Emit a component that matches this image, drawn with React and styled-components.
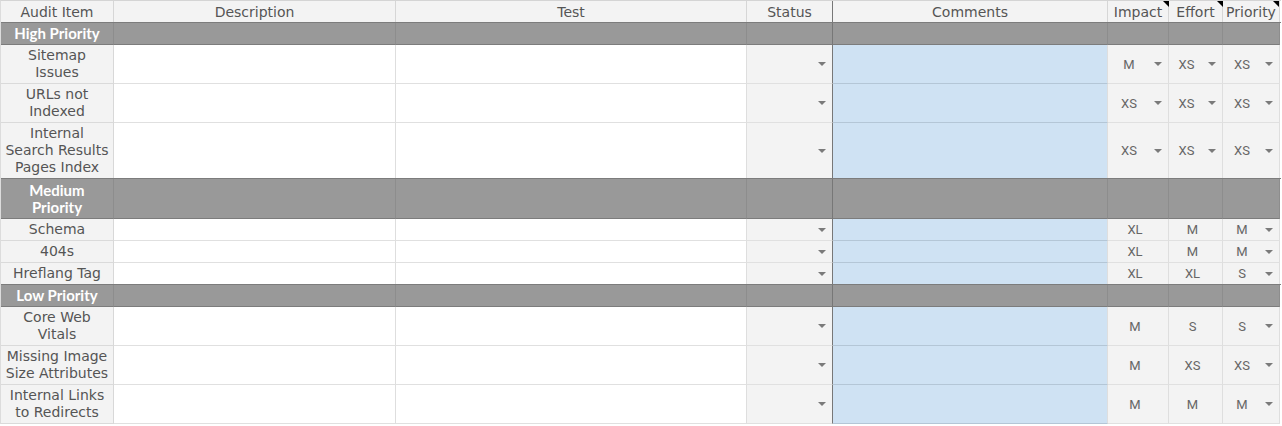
import styled, { createGlobalStyle } from "styled-components";

const GlobalStyle = createGlobalStyle`
	body {
		margin: 0;
		background: #ffffff;
		font-family: "DejaVu Sans", "Liberation Sans", sans-serif;
	}
`;

const sections = [
	{
		title: ["High Priority"],
		h: 22,
		rows: [
			{ item: ["Sitemap", "Issues"], h: 39, impact: ["M", true], effort: ["XS", true], priority: "XS" },
			{ item: ["URLs not", "Indexed"], h: 39, impact: ["XS", true], effort: ["XS", true], priority: "XS" },
			{ item: ["Internal", "Search Results", "Pages Index"], h: 56, impact: ["XS", true], effort: ["XS", true], priority: "XS" },
		],
	},
	{
		title: ["Medium", "Priority"],
		h: 40,
		rows: [
			{ item: ["Schema"], h: 22, impact: ["XL"], effort: ["M"], priority: "M" },
			{ item: ["404s"], h: 22, impact: ["XL"], effort: ["M"], priority: "M" },
			{ item: ["Hreflang Tag"], h: 22, impact: ["XL"], effort: ["XL"], priority: "S" },
		],
	},
	{
		title: ["Low Priority"],
		h: 22,
		rows: [
			{ item: ["Core Web", "Vitals"], h: 39, impact: ["M"], effort: ["S"], priority: "S" },
			{ item: ["Missing Image", "Size Attributes"], h: 39, impact: ["M"], effort: ["XS"], priority: "XS" },
			{ item: ["Internal Links", "to Redirects"], h: 39, impact: ["M"], effort: ["M"], priority: "M" },
		],
	},
];

const Arrow = () => (
	<ArrowSvg width="8" height="4" viewBox="0 0 8 4">
		<path d="M0 0 L8 0 L4 4 Z" fill="#7a7a7a" />
	</ArrowSvg>
);

const Lines = ({ lines }) => (
	<div>
		{lines.map((l, i) => (
			<Line key={i}>{l}</Line>
		))}
	</div>
);

const Pick = ({ value, drop }) => (
	<PickWrap>
		<PickText>{value}</PickText>
		{drop && <Arrow />}
	</PickWrap>
);

const App = () => (
	<>
		<GlobalStyle />
		<Sheet>
			<Row $h={22}>
				<Head>Audit Item</Head>
				<Head>Description</Head>
				<Head>Test</Head>
				<Head $split>Status</Head>
				<Head>Comments</Head>
				<Head $note>Impact</Head>
				<Head $note>Effort</Head>
				<Head $note $last>Priority</Head>
			</Row>
			{sections.map((s, si) => [
				<GroupRow key={"g" + si} $h={s.h}>
					<GroupCell>
						<Lines lines={s.title} />
					</GroupCell>
					<GroupCell />
					<GroupCell />
					<GroupCell $split />
					<GroupCell />
					<GroupCell />
					<GroupCell />
					<GroupCell />
				</GroupRow>,
				...s.rows.map((r, ri) => (
					<Row key={si + "-" + ri} $h={r.h}>
						<ItemCell>
							<Lines lines={r.item} />
						</ItemCell>
						<Cell />
						<Cell />
						<GreyCell $split>
							<Pick value="" drop />
						</GreyCell>
						<CommentCell />
						<GreyCell>
							<Pick value={r.impact[0]} drop={r.impact[1]} />
						</GreyCell>
						<GreyCell>
							<Pick value={r.effort[0]} drop={r.effort[1]} />
						</GreyCell>
						<GreyCell>
							<Pick value={r.priority} drop />
						</GreyCell>
					</Row>
				)),
			])}
		</Sheet>
	</>
);

const Sheet = styled.div`
	width: 1280px;
	border-top: 1px solid #d4d4d4;
	border-left: 1px solid #dcdcdc;
	font-size: 14px;
	color: #555555;
`;

const Row = styled.div`
	display: grid;
	grid-template-columns: 113px 282px 351px 86px 275px 61px 54px 57px;
	height: ${(p) => p.$h}px;
`;

const GroupRow = styled(Row)`
	position: relative;
	box-shadow: 0 -1px 0 #7c7c7c;
`;

const Cell = styled.div`
	box-sizing: border-box;
	display: flex;
	align-items: center;
	justify-content: center;
	min-width: 0;
	background: #ffffff;
	border-right: 1px solid ${(p) => (p.$split ? "#777777" : "#dedede")};
	border-bottom: 1px solid #e0e0e0;
`;

const Head = styled(Cell)`
	position: relative;
	background: #f3f3f3;
	white-space: nowrap;
	line-height: 20px;
	border-right-color: ${(p) => (p.$split ? "#777777" : "#d6d6d6")};
	border-bottom: 0;
	${(p) =>
		p.$note &&
		`&::after {
			content: "";
			position: absolute;
			top: 0;
			right: ${p.$last ? 0 : -1}px;
			border-style: solid;
			border-width: 0 6px 6px 0;
			border-color: transparent #000000 transparent transparent;
		}`}
`;

const GroupCell = styled(Cell)`
	background: #999999;
	border-right-color: ${(p) => (p.$split ? "#777777" : "#8d8d8d")};
	border-bottom-color: #7c7c7c;
	color: #ffffff;
	font-family: Lato, "Liberation Sans", sans-serif;
	font-size: 15px;
	font-weight: 700;
	text-align: center;
`;

const ItemCell = styled(Cell)`
	background: #f3f3f3;
	text-align: center;
	white-space: nowrap;
	border-bottom-color: #dadada;
	border-right-color: #d8d8d8;
`;

const Line = styled.div`
	height: 17px;
	line-height: 17px;
`;

const GreyCell = styled(Cell)`
	background: #f3f3f3;
	align-items: center;
	justify-content: stretch;
`;

const CommentCell = styled(Cell)`
	background: #cfe2f3;
	border-bottom-color: #b4c6d6;
	border-right-color: #dedede;
`;

const PickWrap = styled.div`
	flex: 1;
	display: flex;
	align-items: center;
	padding-right: 6px;
	font-family: Roboto, "Liberation Sans", sans-serif;
	font-size: 13px;
	color: #666666;
`;

const PickText = styled.span`
	flex: 1;
	text-align: center;
`;

const ArrowSvg = styled.svg`
	flex: none;
	margin-left: 4px;
`;

export default App;
